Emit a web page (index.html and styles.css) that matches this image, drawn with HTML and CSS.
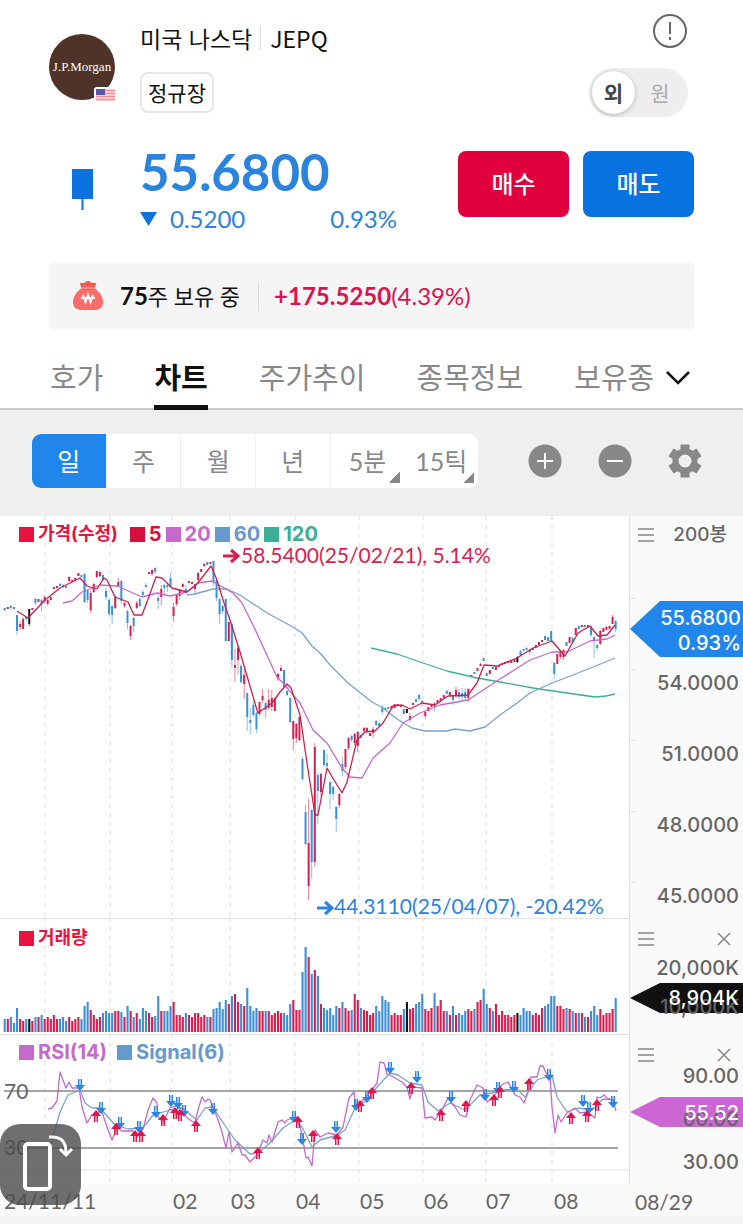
FILE: index.html
```html
<!DOCTYPE html>
<html lang="ko">
<head>
    <meta charset="UTF-8">
    <meta name="viewport" content="width=device-width, initial-scale=1">
    <title>JEPQ</title>
    <link rel="stylesheet" href="styles.css">
</head>
<body>
    <header class="stock">
        <div class="stock-top">
            <svg class="logo" viewBox="0 0 67 67" role="img" aria-label="J.P.Morgan">
                <circle cx="33" cy="33" r="33" fill="#4f3328"/>
                <text x="33" y="37" text-anchor="middle" class="logo-text">J.P.Morgan</text>
                <rect x="45" y="53" width="23" height="15" rx="3" fill="#fff"/>
                <rect x="47" y="55" width="19" height="12" rx="1" fill="#ffc9cf"/>
                <path d="M47 56.500h19M47 59.500h19M47 62.500h19M47 65.500h19" stroke="#f58f9c"/>
                <rect x="47" y="55" width="9" height="6" fill="#5458a8"/>
            </svg>
            <div class="stock-info">
                <h1 class="stock-name"><span>미국 나스닥</span><span class="ticker">JEPQ</span></h1>
                <span class="session">정규장</span>
            </div>
            <div class="stock-side">
                <button class="icon-btn info-btn" aria-label="안내">
                    <svg width="36" height="36" viewBox="0 0 36 36" fill="none" stroke="#666" stroke-width="2">
                        <circle cx="18" cy="18" r="16"/>
                        <path d="M18 9v12M18 24v3"/>
                    </svg>
                </button>
                <div class="currency">
                    <label><input type="radio" name="currency" checked><span>외</span></label>
                    <label><input type="radio" name="currency"><span>원</span></label>
                </div>
            </div>
        </div>
        <div class="stock-price">
            <svg class="candle-icon" viewBox="0 0 67 42">
                <path d="M23 0h21v30H23z" fill="#0a73e0"/>
                <path d="M33.500 30v11" stroke="#0a73e0" stroke-width="2"/>
            </svg>
            <div class="price-info">
                <div class="price">55.6800</div>
                <div class="change">
                    <svg width="17" height="14" viewBox="0 0 17 14"><path d="M0 0h17L8.500 14z" fill="#0a73e0"/></svg>
                    <span>0.5200</span>
                    <span class="percent">0.93%</span>
                </div>
            </div>
            <div class="orders">
                <button class="order buy">매수</button>
                <button class="order sell">매도</button>
            </div>
        </div>
        <div class="holding">
            <svg width="32" height="30" viewBox="0 0 32 30">
                <path d="M10 7C4 11 1 16 1 21c0 6 4 8 9 8h12c5 0 9-2 9-8 0-5-3-10-9-14z" fill="#f76d6b"/>
                <path d="M8 3c0-2 2-1 3-1 2 0 3-2 5-2s3 2 5 2c1 0 3-1 3 1l-2 6H10z" fill="#f05b5a"/>
                <path d="M10 7h12" stroke="#fa8b88" stroke-width="2"/>
                <path d="M11 14l2.500 7 2.500-7 2.500 7 2.500-7M9 17h14" fill="none" stroke="#fff" stroke-width="2"/>
            </svg>
            <span class="shares"><b>75</b>주 보유 중</span>
            <span class="profit"><b>+175.5250</b>(4.39%)</span>
        </div>
    </header>

    <nav class="tabs">
        <a href="#">호가</a>
        <a href="#" class="active">차트</a>
        <a href="#">주가추이</a>
        <a href="#">종목정보</a>
        <a href="#">보유종</a>
        <button class="icon-btn more" aria-label="더보기">
            <svg width="26" height="16" viewBox="0 0 26 16" fill="none" stroke="#111" stroke-width="2.500"><path d="M2 2l11 11L24 2"/></svg>
        </button>
    </nav>

    <div class="toolbar">
        <div class="periods">
            <button class="active">일</button>
            <button>주</button>
            <button>월</button>
            <button>년</button>
            <button class="sub">5분</button>
            <button class="sub">15틱</button>
        </div>
        <div class="tools">
            <button class="icon-btn" aria-label="확대">
                <svg width="34" height="34" viewBox="0 0 34 34"><circle cx="17" cy="17" r="16.500" fill="#888"/><path d="M17 9v16M9 17h16" stroke="#fff" stroke-width="2"/></svg>
            </button>
            <button class="icon-btn" aria-label="축소">
                <svg width="34" height="34" viewBox="0 0 34 34"><circle cx="17" cy="17" r="16.500" fill="#888"/><path d="M9 17h16" stroke="#fff" stroke-width="2"/></svg>
            </button>
            <button class="icon-btn" aria-label="설정">
                <svg width="34" height="34" viewBox="0 0 34 34"><path fill="#888" fill-rule="evenodd" d="M12.500.5h9v4.600l3 1.700 4-2.300 5 7.700-4 2.800v4l4 2.800-5 7.700-4-2.300-3 1.700v4.600h-9v-4.600l-3-1.700-4 2.300-5-7.700 4-2.800v-4l-4-2.800 5-7.700 4 2.300 3-1.700zM17 10.500a6.500 6.500 0 1 0 0 13 6.500 6.500 0 0 0 0-13z"/></svg>
            </button>
        </div>
    </div>

    <main class="chart">
        <section class="pane">
            <div class="plot">
                <svg id="priceChart" viewBox="0 0 629 402"></svg>
                <div class="legend">
                    <span class="key red">가격(수정)</span>
                    <span class="key crimson ma num">5</span>
                    <span class="key purple num">20</span>
                    <span class="key blue num">60</span>
                    <span class="key green num">120</span>
                </div>
            </div>
            <aside class="axis axis-price">
                <div class="axis-head">
                    <button class="icon-btn" aria-label="메뉴"><svg width="16" height="16" viewBox="0 0 16 16"><path d="M0 2h16M0 8h16M0 14h16" stroke="#888" stroke-width="1.500"/></svg></button>
                    <span class="count">200봉</span>
                </div>
                <ul class="scale scale-price">
                    <li>54.0000</li>
                    <li>51.0000</li>
                    <li>48.0000</li>
                    <li>45.0000</li>
                </ul>
                <div class="tag tag-price"><span>55.6800</span><span>0.93%</span></div>
            </aside>
        </section>

        <section class="pane">
            <div class="plot">
                <svg id="volumeChart" viewBox="0 0 629 116"></svg>
                <div class="legend legend-low"><span class="key red">거래량</span></div>
            </div>
            <aside class="axis">
                <div class="axis-head axis-head-low">
                    <button class="icon-btn" aria-label="메뉴"><svg width="16" height="16" viewBox="0 0 16 16"><path d="M0 2h16M0 8h16M0 14h16" stroke="#888" stroke-width="1.500"/></svg></button>
                    <button class="icon-btn" aria-label="닫기"><svg width="14" height="14" viewBox="0 0 14 14"><path d="M1 1l12 12M13 1L1 13" stroke="#888" stroke-width="1.500"/></svg></button>
                </div>
                <div class="tag tag-volume"></div>
                <ul class="scale scale-volume">
                    <li>20,000K</li>
                    <li>10,000K</li>
                </ul>
                <div class="tag-value value-volume">8,904K</div>
            </aside>
        </section>

        <section class="pane">
            <div class="plot">
                <svg id="rsiChart" viewBox="0 0 629 149"></svg>
                <div class="legend">
                    <span class="key purple num">RSI(14)</span>
                    <span class="key blue signal num">Signal(6)</span>
                </div>
            </div>
            <aside class="axis">
                <div class="axis-head axis-head-low">
                    <button class="icon-btn" aria-label="메뉴"><svg width="16" height="16" viewBox="0 0 16 16"><path d="M0 2h16M0 8h16M0 14h16" stroke="#888" stroke-width="1.500"/></svg></button>
                    <button class="icon-btn" aria-label="닫기"><svg width="14" height="14" viewBox="0 0 14 14"><path d="M1 1l12 12M13 1L1 13" stroke="#888" stroke-width="1.500"/></svg></button>
                </div>
                <div class="tag tag-rsi"></div>
                <ul class="scale scale-rsi">
                    <li>90.00</li>
                    <li>60.00</li>
                    <li>30.00</li>
                </ul>
                <div class="tag-value value-rsi">55.52</div>
            </aside>
        </section>

        <footer class="dates">
            <svg id="dateAxis" viewBox="0 0 629 33"></svg>
            <span class="last-date">08/29</span>
        </footer>

        <button class="rotate" aria-label="가로 보기">
            <svg width="81" height="81" viewBox="0 0 81 81" fill="none" stroke="#fff" stroke-width="3">
                <rect x="25" y="20" width="25" height="45" rx="3" stroke-width="4"/>
                <path d="M49 13c12-1 17 4 17 16M60 25l6 6 6-6"/>
            </svg>
        </button>
    </main>
    <script src="chart.js"></script>
</body>
</html>
```
FILE: styles.css
```css
* {
    box-sizing: border-box;
}
body {
    margin: 0;
    background: #fff;
    color: #111;
    font-family: Lato, "Noto Sans CJK KR", sans-serif;
}
button {
    border: none;
    padding: 0;
    background: none;
    font-family: inherit;
    cursor: pointer;
}
svg {
    display: block;
}
.icon-btn {
    display: flex;
    align-items: center;
    justify-content: center;
}

/* header */
.stock {
    padding: 12px 49px 0;
}
.stock-top {
    display: flex;
    gap: 24px;
    height: 106px;
}
.logo {
    width: 67px;
    height: 67px;
    margin-top: 22px;
    overflow: visible;
    flex: none;
}
.logo-text {
    font-family: "Liberation Serif", serif;
    font-size: 13px;
    fill: #fff;
}
.stock-info {
    flex: 1;
    padding-top: 10px;
}
.stock-name {
    display: flex;
    align-items: center;
    margin: 0;
    font-family: "Noto Sans CJK KR", sans-serif;
    font-size: 23px;
    font-weight: 400;
    line-height: 32px;
}
.ticker {
    border-left: 1px solid #ddd;
    margin-left: 8px;
    padding-left: 9px;
    line-height: 24px;
}
.session {
    display: inline-block;
    margin-top: 18px;
    padding: 0 6px;
    border: 2px solid #e6e6e6;
    border-radius: 8px;
    font-size: 21px;
    line-height: 37px;
}
.stock-side {
    display: flex;
    flex-direction: column;
    align-items: flex-end;
    gap: 19px;
    padding: 1px 6px 0 0;
}
.currency {
    display: flex;
    align-items: center;
    padding: 3px;
    border-radius: 25px;
    background: #eee;
    color: #aaa;
    font-size: 21px;
}
.currency input {
    position: absolute;
    opacity: 0;
}
.currency span {
    display: block;
    width: 43px;
    border-radius: 50%;
    line-height: 43px;
    text-align: center;
}
.currency label + label span {
    width: 50px;
}
.currency input:checked + span {
    background: #fff;
    color: #444;
    font-weight: 700;
    box-shadow: 0 1px 4px rgba(0,0,0,0.25);
}
.stock-price {
    display: flex;
    gap: 24px;
    margin-top: 27px;
}
.candle-icon {
    width: 67px;
    height: 42px;
    margin-top: 24px;
    flex: none;
}
.price-info {
    flex: 1;
    max-width: 257px;
    color: #2a83dc;
}
.price {
    font-size: 51px;
    font-weight: 700;
    line-height: 54px;
}
.change {
    display: flex;
    align-items: center;
    gap: 13px;
    font-size: 24px;
    line-height: 40px;
}
.percent {
    margin-left: auto;
}
.orders {
    display: flex;
    gap: 14px;
    margin-left: auto;
    padding-top: 6px;
}
.order {
    width: 111px;
    height: 66px;
    padding-bottom: 4px;
    border-radius: 8px;
    color: #fff;
    font-size: 24px;
    font-weight: 500;
}
.buy {
    background: #e0003c;
}
.sell {
    background: #0873e0;
}
.holding {
    display: flex;
    align-items: center;
    height: 66px;
    margin-top: 24px;
    padding-left: 23px;
    border-radius: 4px;
    background: #f5f5f5;
    font-size: 22px;
    line-height: 28px;
}
.shares {
    margin-left: 16px;
    padding-right: 18px;
    border-right: 1px solid #ddd;
}
.shares b, .profit {
    font-size: 24px;
}
.profit {
    margin-left: 15px;
    color: #d81450;
}

/* tabs */
.tabs {
    display: flex;
    gap: 51px;
    height: 81px;
    padding: 24px 50px 0;
    border-bottom: 2px solid #c8c8c8;
}
.tabs a {
    height: 57px;
    color: #888;
    font-size: 29px;
    line-height: 50px;
    text-decoration: none;
    white-space: nowrap;
}
.tabs a.active {
    border-bottom: 5px solid #111;
    color: #111;
    font-weight: 700;
}
.more {
    height: 50px;
    margin-left: -40px;
}

/* toolbar */
.toolbar {
    display: flex;
    align-items: center;
    justify-content: space-between;
    height: 106px;
    padding: 0 41px 4px 32px;
    background: #efefef;
}
.periods {
    display: flex;
    width: 446px;
    height: 54px;
    border-radius: 9px;
    overflow: hidden;
    background: #fff;
}
.periods button {
    flex: 1;
    padding-bottom: 2px;
    border-right: 1px solid #f0f0f0;
    color: #888;
    font-size: 25px;
}
.periods button.active {
    background: #2186ec;
    color: #fff;
}
.periods .sub {
    border: none;
    background: linear-gradient(135deg, transparent 50%, #888 50%) right 4px bottom 5px / 10px 12px no-repeat;
}
.tools {
    display: flex;
    gap: 36px;
}

/* chart */
.chart {
    position: relative;
    color: #666;
}
.pane {
    display: flex;
    border-bottom: 1px solid #e2e2e2;
    margin-bottom: -1px;
}
.plot {
    position: relative;
    flex: 1;
}
.plot svg {
    width: 100%;
}
.legend {
    position: absolute;
    top: 7px;
    left: 19px;
    display: flex;
    gap: 4px;
    font-family: Inter, "Noto Sans CJK KR", sans-serif;
    font-size: 18px;
    font-weight: 700;
    line-height: 22px;
}
.legend-low {
    top: 9px;
}
.key {
    display: flex;
    align-items: center;
    gap: 4px;
}
.key::before {
    content: "";
    width: 15px;
    height: 15px;
    background: currentColor;
}
.key.num {
    font-size: 20px;
}
.key.ma {
    margin-left: 8px;
}
.key.signal {
    margin-left: 6px;
}
.red {
    color: #e8123f;
}
.crimson {
    color: #d80f3c;
}
.purple {
    color: #c56acb;
}
.blue {
    color: #6699cc;
}
.green {
    color: #3dae94;
}
.axis {
    position: relative;
    width: 114px;
    border-left: 1px solid #e2e2e2;
    background: #fafafa;
    font-family: Inter, "Noto Sans CJK KR", sans-serif;
    font-size: 20px;
    font-weight: 500;
    line-height: 20px;
}
.axis-price {
    background: repeating-linear-gradient(#e2e2e2 0 1px, transparent 1px 71px) left 82px / 6px 290px no-repeat #fafafa;
}
.axis-head {
    display: flex;
    align-items: center;
    justify-content: space-between;
    padding: 9px 12px 0 8px;
    height: 29px;
}
.axis-head-low {
    padding-top: 13px;
}
.count {
    margin-right: 4px;
    font-size: 19px;
}
.scale {
    display: flex;
    flex-direction: column;
    margin: 0;
    padding: 0 4px 0 0;
    list-style: none;
    text-align: right;
}
.scale-price {
    gap: 51px;
    padding-top: 128px;
}
.scale-volume, .scale-rsi {
    position: relative;
}
.scale-volume {
    gap: 19px;
    padding-top: 11px;
}
.scale-rsi {
    gap: 23px;
    padding-top: 3px;
}
.tag {
    position: absolute;
    left: 0;
    right: 0;
    display: flex;
    flex-direction: column;
    justify-content: center;
    align-items: flex-end;
    padding-right: 2px;
    color: #fff;
    clip-path: polygon(0 50%, 30px 0, 100% 0, 100% 100%, 30px 100%);
}
.tag-price {
    top: 85px;
    height: 56px;
    padding-top: 4px;
    background: #2186ec;
    line-height: 25px;
}
.tag-volume {
    top: 65px;
    height: 30px;
    background: #111;
}
.tag-rsi {
    top: 63px;
    height: 30px;
    background: #cc66d2;
}
.tag-value {
    position: absolute;
    right: 4px;
    color: #fff;
}
.value-volume {
    top: 70px;
}
.value-rsi {
    top: 69px;
}
.dates {
    display: flex;
    background: #fafafa;
    border-bottom: 8px solid #f5f5f5;
    font-size: 21px;
}
.dates svg {
    flex: 1;
    min-width: 0;
}
.last-date {
    width: 114px;
    padding: 5px 0 0 6px;
    line-height: 28px;
}
.rotate {
    position: absolute;
    left: 0;
    bottom: 19px;
    border-radius: 20px;
    background: rgba(75,75,75,0.8);
}

/* drawings */
.grid {
    stroke: #ddd;
    stroke-dasharray: 4 5;
}
.level {
    stroke: #888;
    stroke-width: 1.5;
}
.line {
    fill: none;
    stroke-width: 1.3;
    stroke-linejoin: round;
}
.note {
    font-size: 21px;
}
.date-text {
    font-size: 21px;
    fill: #666;
}
```
FILE: chart.js
```js
const COLORS = { r: '#d81e4f', b: '#3b8fd6', k: '#111' };
const MONTHS = [45, 110, 172, 230, 295, 359, 423, 486, 552];
const STEP = 3.07;

// color + body top, body height, upper wick, lower wick
const candles = `b92,2,0,1 r91,2 b90,2,1,1 b91,2 b99,16,0,4 r108,3,3,3 r103,10,2 b101,2,1,2 k93,15,0,2 r92,2
b83,4,1,2 r83,3 b84,4,1,8 r81,4,2,2 r84,4,1,1 r81,3 r71,2 r70,2 b68,2,1,1 b69,2,1,1
b70,2 r61,4,1,1 r64,2 r62,2,1,1 r57,3 b59,2 b58,28,1,1 b74,10,0,3 r77,17,2,3 r68,8,1,1
r55,6,0,1 r56,4,1,1 b59,5,1 b75,6,3,3 b84,14,2,2 b90,9,1,9 r81,11,2,1 r66,4,4,1 b65,20,1,3 r87,3,1,2
b95,12,1,6 r110,10,1,4 b102,8,1,6 r87,5,2,1 b83,7,1,1 b76,3,2,1 b69,2,2,1 r56,2 r54,4,1,2 b52,4,1,2
b82,3,4,8 r73,8,4,8 b69,3,1,7 b69,2,2,5 b62,9,5 r91,9,4,6 r79,9,1,2 r74,6,1,4 r68,3,1 b73,4,4
r65,2 r66,2 r68,5,0,4 r57,7,1,2 r53,3 r48,2,1,1 b46,3 r46,2 b45,22,0,3 b64,18,1,3
b83,15,1,10 b90,5,1,3 b83,42 r106,19 b108,36,1,8 r149,3,16,14 r132,12,2,14 b150,16,2,2 r159,9,6,15 b177,24,0,14
b204,3,12,11 b189,10,4,2 b197,16,1,4 r186,12,0,2 r180,4,7,3 b187,7,1,8 r184,8,11,2 r182,9,8,4 r182,13 r158,5,1,2
r152,3,3 b154,17,0,2 b175,4,1,1 b182,24,0,1 r205,18,0,11 r208,14,1,5 r201,23,0,1 b243,20,2,2 b296,32,7,1 r327,43,44,14
b294,52,1,17 r231,115,4,5 b259,16,2,33 r258,18,1,4 b234,15,0,2 b247,3,9,1 b266,12,1,15 b271,7,1,6 b291,12,1,13 r278,11,1,3
b248,7,7,5 r233,18,0,2 r222,10,1,2 b220,4,1,2 r218,9,1,2 r216,14,1,6 b219,3 r212,3,1,1 r212,3,1,1 r217,3
r213,4,2,5 b205,4,1,1 b207,3 b191,5,2,2 b192,2,1,1 b191,2 r190,3 r188,4 r188,2 r189,2
b193,5 k193,4 r200,4,3,2 r187,2 b183,3 b179,4,1,1 b185,2,1,3 r196,4,1,3 r191,4 r188,3
b187,4,1,4 r184,3 r182,3 r179,3 b175,3,1 r176,3 b180,4,1,5 r174,5,3,3 b176,5,3,3 b177,4,5,4
b176,6,4,3 r173,9,1,4 r159,2 b156,2 r152,3 r148,2,1 b142,3 b157,3 r154,4 b151,2
r151,3 r149,2 r147,2 r146,2 r145,2 r144,3 r143,3 k141,5,1,1 b135,4,1 b133,2
b132,2,1 b134,2,1,3 r132,2 r129,3 r126,3 r124,2 b120,4 b121,4 b115,11 b147,11,1,5
r138,10 r135,6,1,2 r134,7,1,3 b126,4 r121,6 b122,4,2 r112,7 b110,3 r109,2 b109,2
r109,2 b111,8,1,2 b121,4,1,17 b129,3,1,3 r115,13,1,1 r112,4 r111,3,1 r110,3 r101,7,2 b105,8,1,3`.split(/\s+/);

const volumes = [
    13,13,15,9,24,13,11,13,13,11,15,15,17,13,15,13,17,13,13,15,11,15,11,13,15,13,26,30,22,17,13,15,19,21,19,19,21,21,20,15,
    26,21,15,19,13,24,21,19,15,16,36,21,21,21,26,30,17,17,15,19,17,15,19,19,15,17,15,15,23,24,30,23,32,28,36,38,30,28,26,44,
    26,21,24,21,21,21,21,17,19,21,19,19,17,28,32,22,22,60,85,75,58,62,56,28,24,22,24,17,26,24,30,24,21,22,38,32,24,22,21,17,
    19,26,21,36,32,30,17,19,17,17,23,30,23,24,28,30,38,23,21,24,39,26,32,21,21,17,26,17,19,17,21,23,21,23,30,32,43,28,24,21,
    28,17,21,17,17,15,17,19,17,24,21,21,17,19,17,24,26,28,36,36,26,26,23,24,23,21,19,19,19,15,15,21,26,17,23,17,19,19,23,34
];

const ma5 = '17,95 28,102 45,84 60,72 80,62 87,70 97,73 104,62 107,64 115,81 128,86 134,99 142,99 147,86 156,61 162,62 172,72 187,76 197,68 211,50 217,64 224,87 230,104 240,136 257,194 258,197 272,187 280,176 287,168 291,172 300,199 307,247 315,299 318,299 327,252 334,264 342,277 347,266 357,224 365,216 375,215 383,207 393,190 402,189 410,193 422,187 435,189 448,180 468,179 477,167 484,149 497,150 517,142 533,132 552,125 565,140 578,117 590,110 598,120 607,119 615,109';
const ma20 = '63,87 72,85 82,76 100,69 117,70 133,77 142,81 157,77 170,80 187,76 198,67 212,65 233,77 242,87 253,109 277,161 283,167 293,179 300,187 313,214 327,227 342,252 350,261 362,262 373,242 390,227 403,207 420,197 440,189 468,184 500,163 530,144 552,136 567,136 590,125 607,123 615,119';
const ma60 = '187,79 195,78 213,73 227,73 240,79 267,97 293,111 302,117 312,130 320,137 330,149 348,167 372,186 383,192 397,203 412,212 425,215 447,215 455,213 470,215 485,211 500,199 517,187 530,177 552,167 573,159 593,151 603,147 615,142';
const ma120 = '371,132 397,138 423,147 447,155 477,162 500,166 533,172 567,177 595,181 606,180 615,178';

const rsi = '48,75 52,74 57,67 60,38 66,54 69,48 72,54 79,54 82,73 87,89 92,81 97,78 102,78 107,93 112,106 117,94 122,97 128,97 133,97 137,103 143,95 148,76 153,64 157,69 158,83 163,88 170,74 178,71 187,84 195,89 198,76 202,63 205,68 208,65 210,66 217,83 222,98 226,114 229,98 232,118 238,109 242,121 245,121 250,128 257,121 263,106 267,109 269,101 272,108 278,88 282,86 285,89 287,86 293,84 298,83 302,101 306,124 308,123 312,132 315,96 320,103 328,99 337,101 343,93 349,64 354,58 356,73 363,66 372,56 377,49 380,28 384,29 387,40 390,41 402,48 407,53 410,65 413,53 422,54 425,84 432,83 435,86 442,76 448,64 455,73 460,81 466,83 470,66 477,51 483,54 487,68 493,64 500,53 503,50 508,48 515,61 520,63 524,69 527,61 531,43 537,43 540,32 543,32 546,39 550,43 552,73 555,99 558,81 561,88 567,79 575,74 580,79 587,78 595,84 597,63 600,64 604,61 607,64 613,66 616,77';
const signal = '48,120 55,96 60,78 68,61 80,56 85,69 92,74 100,74 115,91 128,95 143,94 153,81 170,76 182,74 197,86 205,74 213,73 220,84 235,106 250,120 258,119 270,109 283,94 295,86 302,93 312,113 320,106 338,101 345,96 355,74 367,66 377,53 390,39 398,41 410,49 422,51 428,68 438,77 450,69 465,76 480,61 492,59 503,56 517,55 525,63 537,46 552,41 557,63 567,78 578,74 592,76 603,65 615,66';

const sellMarks = [[80,51],[101,74],[120,89],[139,93],[156,78],[171,67],[178,69],[184,77],[213,75],[294,83],[302,105],[336,93],[356,71],[367,63],[390,34],[417,43],[451,63],[485,61],[498,54],[514,53],[549,41],[583,67],[589,74],[613,68]];
const buyMarks = [[96,82],[116,95],[135,102],[141,102],[163,86],[175,79],[180,81],[196,92],[258,119],[298,88],[313,102],[337,105],[360,72],[372,59],[411,54],[441,81],[466,72],[494,66],[500,58],[529,50],[571,84],[587,82],[597,71]];

function grid(height) {
    return MONTHS.map(x => `<path class="grid" d="M${x} 0V${height}"/>`).join('');
}

function line(points, color) {
    return `<polyline class="line" stroke="${color}" points="${points}"/>`;
}

function drawPrice() {
    let out = grid(402);
    candles.forEach((item, i) => {
        const color = COLORS[item[0]];
        const [top, h, up = 0, down = 0] = item.slice(1).split(',').map(Number);
        const x = 4.7 + i * STEP;
        out += `<path d="M${x} ${top - up}V${top + h + down}" stroke="${color}" stroke-width="0.8" opacity="0.7"/>`;
        out += `<path d="M${x} ${top}V${top + h}" stroke="${color}" stroke-width="2"/>`;
    });
    out += line(ma120, '#3dae94') + line(ma60, '#7ba3c8') + line(ma20, '#c06ccb') + line(ma5, '#c4234f');
    out += '<path d="M223 40h14M231 34l7 6-7 6" fill="none" stroke="#d81e4f" stroke-width="3"/>';
    out += '<text class="note" x="241" y="47" fill="#d81e4f">58.5400(25/02/21), 5.14%</text>';
    out += '<path d="M317 392h14M325 386l7 6-7 6" fill="none" stroke="#2a83dc" stroke-width="3"/>';
    out += '<text class="note" x="334" y="398" fill="#2a83dc">44.3110(25/04/07), -20.42%</text>';
    document.getElementById('priceChart').innerHTML = out;
}

function drawVolume() {
    let out = grid(116);
    volumes.forEach((h, i) => {
        const x = 3.7 + i * STEP;
        out += `<rect x="${x}" y="${114 - h}" width="2.1" height="${h}" fill="${COLORS[candles[i][0]]}"/>`;
    });
    document.getElementById('volumeChart').innerHTML = out;
}

function drawRsi() {
    let out = grid(149);
    out += '<path class="level" d="M4 57H618M4 114H618"/><path d="M0 136H629" stroke="#e2e2e2"/>';
    out += '<text class="date-text" x="4" y="65">70</text><text class="date-text" x="4" y="121">30</text>';
    out += line(signal, '#7ba3c8') + line(rsi, '#c06ccb');
    sellMarks.forEach(([x, y]) => {
        out += `<path transform="translate(${x} ${y})" d="M-2-6h1.500V0h1V-6H2V0h3L0 6-5 0h3z" fill="#2a86e0"/>`;
    });
    buyMarks.forEach(([x, y]) => {
        out += `<path transform="translate(${x} ${y})" d="M-2 6h1.500V0h1V6H2V0h3L0-6-5 0h3z" fill="#e0144c"/>`;
    });
    document.getElementById('rsiChart').innerHTML = out;
}

function drawDates() {
    const labels = [['24/11/11', 4], ['02', 173], ['03', 231], ['04', 296], ['05', 360], ['06', 424], ['07', 486], ['08', 554]];
    document.getElementById('dateAxis').innerHTML =
        labels.map(([text, x]) => `<text class="date-text" x="${x}" y="26">${text}</text>`).join('');
}

drawPrice();
drawVolume();
drawRsi();
drawDates();
```
